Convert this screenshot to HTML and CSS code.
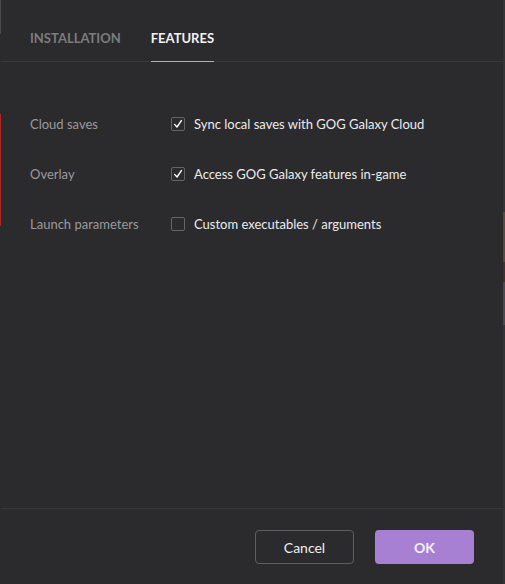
FILE: index.html
```html
<!DOCTYPE html>
<html lang="en">
<head>
<meta charset="utf-8">
<title>Game settings</title>
<link rel="stylesheet" href="styles.css">
</head>
<body>
<div class="backdrop">
  <div class="dialog">
    <nav class="tabs">
      <span class="tab">Installation</span>
      <span class="tab tab-active">Features</span>
    </nav>
    <section class="options">
      <div class="option">
        <span class="option-label">Cloud saves</span>
        <label class="check">
          <span class="box checked">
            <svg viewBox="0 0 14 14" width="14" height="14"><path d="M3.6 7.4 L6 10 L10.4 3.6" fill="none" stroke="#fff" stroke-width="1.4" stroke-linecap="round" stroke-linejoin="round"/></svg>
          </span>
          <span class="check-text">Sync local saves with GOG Galaxy Cloud</span>
        </label>
      </div>
      <div class="option">
        <span class="option-label">Overlay</span>
        <label class="check">
          <span class="box checked">
            <svg viewBox="0 0 14 14" width="14" height="14"><path d="M3.6 7.4 L6 10 L10.4 3.6" fill="none" stroke="#fff" stroke-width="1.4" stroke-linecap="round" stroke-linejoin="round"/></svg>
          </span>
          <span class="check-text">Access GOG Galaxy features in-game</span>
        </label>
      </div>
      <div class="option">
        <span class="option-label">Launch parameters</span>
        <label class="check">
          <span class="box"></span>
          <span class="check-text">Custom executables / arguments</span>
        </label>
      </div>
    </section>
    <footer class="actions">
      <button class="btn btn-secondary">Cancel</button>
      <button class="btn btn-primary">OK</button>
    </footer>
  </div>
</div>
</body>
</html>
```
FILE: styles.css
```css
html, body {
  margin: 0;
  padding: 0;
  height: 100%;
}

body {
  font-family: Lato, "Open Sans", sans-serif;
  background: #2b2b2d;
  overflow: hidden;
}

/* slivers of the launcher window behind the dialog */
.backdrop {
  height: 100%;
  display: flex;
  padding-left: 1px;
  background:
    linear-gradient(to bottom,
      #4a4a4c 0, #4a4a4c 34px,
      #2b2b2d 34px, #2b2b2d 114px,
      #b0282a 114px, #b0282a 226px,
      #2b2b2d 226px) left top / 1px 100% no-repeat,
    linear-gradient(to bottom,
      #343436 0, #343436 212px,
      #5a4a34 212px, #5a4a34 262px,
      #4a2c2c 262px, #4a2c2c 282px,
      #4a4a4e 282px, #4a4a4e 325px,
      #333335 325px) right top / 2px 100% no-repeat,
    #2b2b2d;
}

.dialog {
  width: 502px;
  height: 584px;
  background: #2b2b2d;
  border-radius: 0 0 6px 6px;
  display: flex;
  flex-direction: column;
}

.tabs {
  display: flex;
  gap: 30px;
  padding: 0 29px;
  height: 62px;
  border-bottom: 1px solid #39393b;
  box-sizing: border-box;
  align-items: stretch;
}

.tab {
  display: flex;
  align-items: center;
  padding-top: 15px;
  box-sizing: border-box;
  font-size: 13px;
  font-weight: 700;
  text-transform: uppercase;
  color: #7c7c7e;
  border-bottom: 1px solid transparent;
  margin-bottom: -1px;
}

.tab-active {
  color: #f2f2f2;
  border-bottom-color: #b8a0ec;
}

.options {
  flex: 1;
  display: flex;
  flex-direction: column;
  gap: 30px;
  padding: 52px 29px 0;
}

.option {
  display: flex;
  align-items: center;
  height: 20px;
}

.option-label {
  width: 141px;
  font-size: 13px;
  color: #9a9a9c;
}

.check {
  display: flex;
  align-items: center;
  gap: 9px;
}

.box {
  width: 14px;
  height: 14px;
  border: 1px solid #646466;
  border-radius: 2px;
  display: flex;
  align-items: center;
  justify-content: center;
  box-sizing: border-box;
}

.box svg {
  flex: none;
}

.check-text {
  font-size: 13px;
  color: #ececec;
}

.actions {
  display: flex;
  justify-content: flex-end;
  gap: 21px;
  height: 76px;
  padding: 21px 29px 0 0;
  border-top: 1px solid #39393b;
  box-sizing: border-box;
}

.btn {
  width: 99px;
  height: 34px;
  border-radius: 4px;
  font-family: Lato, "Open Sans", sans-serif;
  font-size: 14px;
  cursor: pointer;
}

.btn-secondary {
  background: transparent;
  border: 1px solid #5e5e60;
  color: #eeeeee;
}

.btn-primary {
  background: #a780d3;
  border: none;
  color: #f4f0fa;
  font-weight: 700;
}
```
